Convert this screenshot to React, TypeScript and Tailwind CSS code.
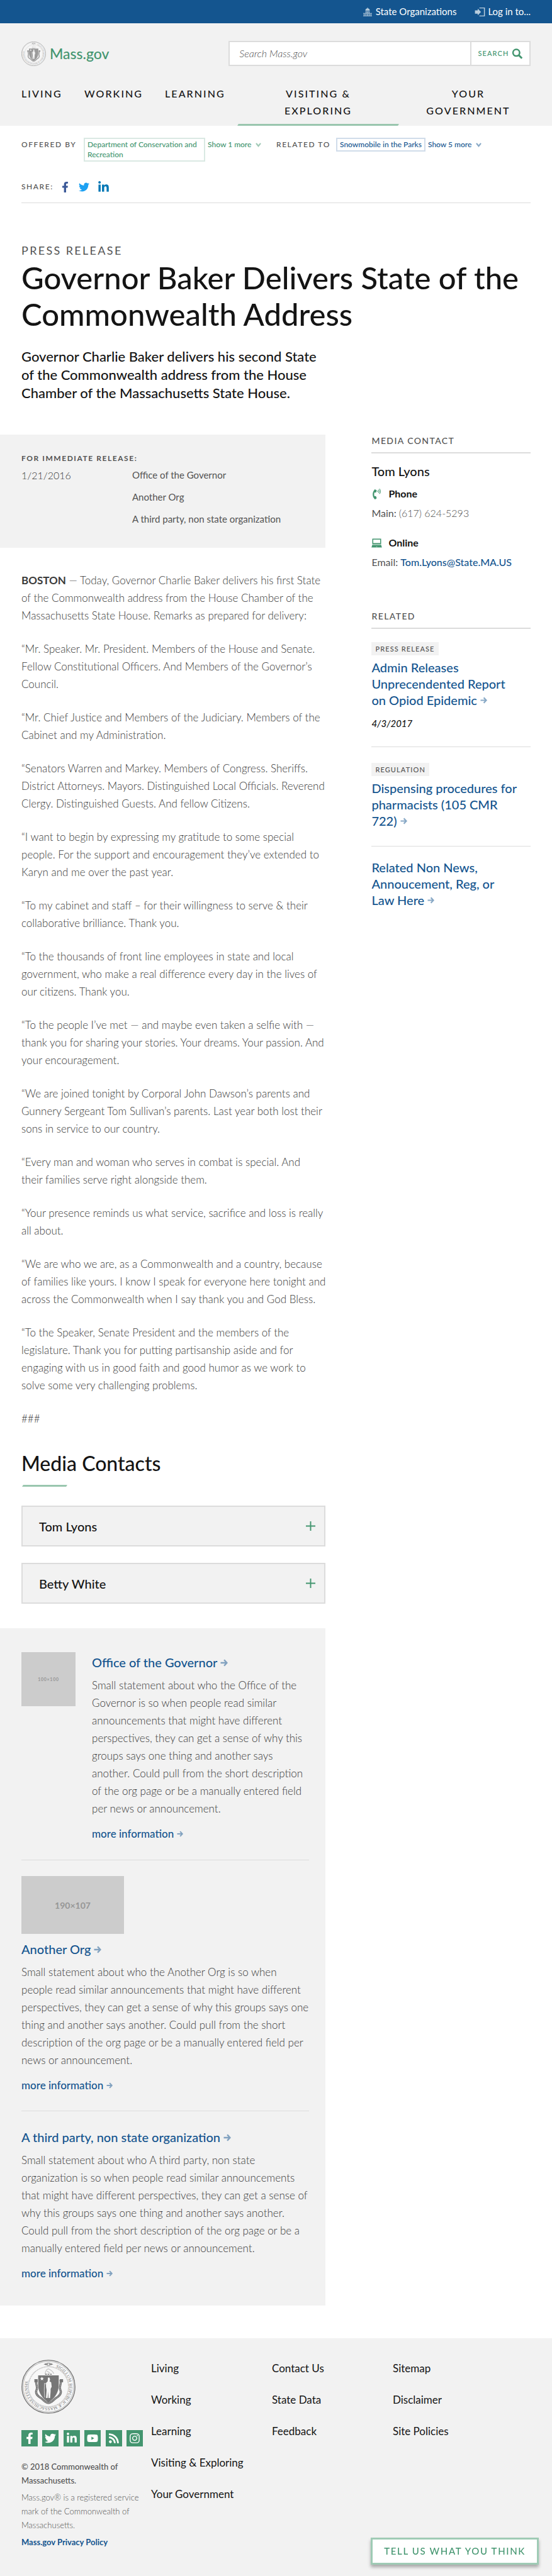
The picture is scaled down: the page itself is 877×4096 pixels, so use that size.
import type { ReactNode } from "react";
import { FaFacebookF, FaInstagram, FaLinkedinIn, FaPhoneVolume, FaRss, FaTwitter, FaYoutube } from "react-icons/fa";

function Seal({ className }: { className: string }) {
  return (
    <svg viewBox="0 0 100 100" className={className} role="img" aria-label="Seal of the Commonwealth">
      <defs>
        <path id="seal-ring" d="M50 11.5 A38.5 38.5 0 1 1 49.9 11.5" />
      </defs>
      <circle cx="50" cy="50" r="49" fill="#f7f7f7" stroke="#767676" strokeWidth="1.6" />
      <circle cx="50" cy="50" r="46.8" fill="none" stroke="#8a8a8a" strokeWidth="0.7" />
      <circle cx="50" cy="50" r="37" fill="none" stroke="#a0a0a0" strokeWidth="1.6" strokeDasharray="1 1" />
      <text fill="#767676" fontSize="8" fontFamily="Liberation Serif, serif">
        <textPath href="#seal-ring" startOffset="14">SIGILLUM REIPUBLICÆ MASSACHUSETTENSIS.</textPath>
      </text>
      <path d="M41 8.5l6-2v4zM59 8.5l-6-2v4z" fill="#767676" />
      <rect x="48" y="6.5" width="4" height="4" fill="none" stroke="#767676" />
      <path d="M44 27c0-6 3-10 6-10 4 2 7 3 10 9M47 21l6 4" fill="none" stroke="#c4c4c4" strokeWidth="1.4" />
      <path d="M44 27h13" stroke="#767676" strokeWidth="1.8" strokeDasharray="3 1.5" />
      <path
        d="M28 37c-3 8 3 12 0 19s3 12 8 15 8 9 14 9 9-6 14-9 11-8 8-15 3-11 0-19"
        fill="none"
        stroke="#767676"
        strokeWidth="4"
      />
      <path
        d="M28 39c-2 7 3 11 0 18s4 11 8 14 8 9 14 9 9-6 14-9 10-7 8-14 2-11 0-18"
        fill="none"
        stroke="#c8c8c8"
        strokeWidth="1"
        strokeDasharray="2 1.4"
      />
      <path d="M24 36h6v6h-6zM71 36h6v6h-6z" fill="#767676" />
      <path d="M31 29h38v17c0 15-7 25-19 33-12-8-19-18-19-33z" fill="#767676" />
      <path d="M38 31.5l1 2.6h2.6l-2.100 1.700.8 2.700-2.300-1.600-2.300 1.600.8-2.700-2.100-1.700H37z" fill="#fff" />
      <path
        d="M49 33h3l1 4-1 3 3 2 1 8-2 4v5l-1 12h-3l-.5-12-1 12h-3l1-15-1-6 0-7 3-3z"
        fill="#f5f5f5"
      />
      <path d="M43 43c-1 8-1 18 0 27M43 45l5-2" fill="none" stroke="#eee" strokeWidth="0.9" />
    </svg>
  );
}

function ArrowIcon({ className }: { className: string }) {
  return (
    <svg viewBox="0 0 14 14" className={`inline opacity-50 ${className}`} aria-hidden="true">
      <path d="M0 7h11M6.500 1.500L11.500 7l-5 5.500" fill="none" stroke="currentColor" strokeWidth="2.800" />
    </svg>
  );
}

function ChevronIcon() {
  return (
    <svg viewBox="0 0 10 8" className="h-[7px] w-[9px] opacity-50" aria-hidden="true">
      <path d="M1 1l4 5 4-5" fill="none" stroke="currentColor" strokeWidth="2.500" />
    </svg>
  );
}

function CapitolIcon() {
  return (
    <svg viewBox="0 0 16 16" className="h-[14px] w-[14px]" fill="#b9cddd" aria-hidden="true">
      <path d="M7.500 0h1v1.500C11 2 12 3.500 12 5.500H4C4 3.500 5 2 7.500 1.500zM4 6.300h8v1H4zM4.500 8h1.500v2H4.500zM7.200 8h1.600v2H7.200zM10 8h1.500v2H10zM0 10h16v1.200H0zM.8 12h2v2.500h-2zM4 12h2v2.500H4zM7 12h2v2.500H7zM10 12h2v2.500h-2zM13.200 12h2v2.500h-2zM0 15h16v1H0z" />
    </svg>
  );
}

function LoginIcon() {
  return (
    <svg viewBox="0 0 18 16" className="h-[14px] w-[17px]" fill="#b9cddd" aria-hidden="true">
      <path d="M0 5h5V2l6 6-6 6v-3H0zM8 0h10v16H8v-1.500h8.300v-13H8z" />
    </svg>
  );
}

function SearchIcon() {
  return (
    <svg viewBox="0 0 20 20" className="h-[17px] w-[18px]" fill="none" stroke="currentColor" aria-hidden="true">
      <circle cx="8" cy="8" r="6.200" strokeWidth="3" />
      <path d="M12.500 12.500L18.500 18.500" strokeWidth="3.400" />
    </svg>
  );
}

function LaptopIcon() {
  return (
    <svg viewBox="0 0 20 18" className="h-[15px] w-[17px]" aria-hidden="true">
      <path d="M2.500 1.500h15v8.500h-15z" fill="#fff" stroke="#43956f" strokeWidth="1.800" />
      <path d="M2 11.500h16l2 6H0z" fill="#43956f" />
      <path d="M2.500 12.500h15M9 16h2" stroke="#b4d5c5" strokeWidth="1" />
    </svg>
  );
}

function OrgBox({ tone, className, children }: { tone: "green" | "blue"; className?: string; children: ReactNode }) {
  const color = tone === "green" ? "border-[#dae9e3] text-[#43956f]" : "border-[#d0dcea] text-[#14558f]";
  return (
    <a href="#org" className={`border-2 px-1 py-px ${color} ${className ?? ""}`}>
      {children}
    </a>
  );
}

const nav = ["Living", "Working", "Learning", "Visiting & Exploring", "Your Government"];

const remarks = [
  "“Mr. Speaker. Mr. President. Members of the House and Senate. Fellow Constitutional Officers. And Members of the Governor’s Council.",
  "“Mr. Chief Justice and Members of the Judiciary. Members of the Cabinet and my Administration.",
  "“Senators Warren and Markey. Members of Congress. Sheriffs. District Attorneys. Mayors. Distinguished Local Officials. Reverend Clergy. Distinguished Guests. And fellow Citizens.",
  "“I want to begin by expressing my gratitude to some special people. For the support and encouragement they’ve extended to Karyn and me over the past year.",
  "“To my cabinet and staff – for their willingness to serve & their collaborative brilliance. Thank you.",
  "“To the thousands of front line employees in state and local government, who make a real difference every day in the lives of our citizens. Thank you.",
  "“To the people I’ve met — and maybe even taken a selfie with — thank you for sharing your stories. Your dreams. Your passion. And your encouragement.",
  "“We are joined tonight by Corporal John Dawson’s parents and Gunnery Sergeant Tom Sullivan’s parents. Last year both lost their sons in service to our country.",
  "“Every man and woman who serves in combat is special. And their\u00a0families serve right alongside them.",
  "“Your presence reminds us what service, sacrifice and loss is really all about.",
  "“We are who we are, as a Commonwealth and a country, because of families like yours. I know I speak for everyone here tonight and across the Commonwealth when I say thank you and God Bless.",
  "“To the Speaker, Senate President and the members of the legislature. Thank you for putting partisanship aside and for engaging with us in good faith and good humor as we work to solve some very challenging problems.",
  "###",
];

const statement = (who: string) =>
  `Small statement about who ${who} is so when people\u00a0read similar announcements that might have different perspectives, they can get a sense of why this groups says one thing and another says another. Could pull from the short description of the org page or be a manually entered field per news or announcement.`;

function OrgText({ title, who }: { title: string; who: string }) {
  return (
    <>
      <h3 className="text-[20px] leading-[26px] font-medium text-[#14558f]">
        <a href="#org">
          {title} <ArrowIcon className="mb-1 h-[12px] w-[13px]" />
        </a>
      </h3>
      <p className="-mr-1 mt-[10px] text-[17px] leading-7 font-light text-[#3a3a3a]">{statement(who)}</p>
      <p className="mt-[14px] text-[17px] leading-6 font-medium text-[#14558f]">
        <a href="#org">
          more information <ArrowIcon className="mb-[3px] h-[10px] w-[11px]" />
        </a>
      </p>
    </>
  );
}

function Accordion({ name }: { name: string }) {
  return (
    <button
      type="button"
      aria-expanded="false"
      className="flex h-[65px] w-full items-center justify-between border-2 border-[#dcdcdc] bg-[#f2f2f2] pr-[14px] pl-[26px] text-[20px] font-medium text-[#141414]"
    >
      {name}
      <svg viewBox="0 0 14 14" className="h-[15px] w-[15px]" aria-hidden="true">
        <path d="M7 0v14M0 7h14" stroke="#43956f" strokeWidth="1.800" />
      </svg>
    </button>
  );
}

function SideHeading({ children }: { children: ReactNode }) {
  return (
    <h2 className="border-b-2 border-[#dcdcdc] pb-[9px] text-[14px] leading-[18px] font-medium tracking-[0.1em] uppercase">
      {children}
    </h2>
  );
}

function Tag({ children }: { children: ReactNode }) {
  return (
    <span className="mb-[6px] block w-fit bg-[#f2f2f2] px-[6px] text-[11px] leading-[21px] font-medium tracking-[0.1em] uppercase">
      {children}
    </span>
  );
}

function RelatedLink({ children }: { children: ReactNode }) {
  return (
    <a href="#related" className="block pr-4 text-[20px] leading-[26px] font-medium text-[#14558f]">
      {children} <ArrowIcon className="mb-1 h-[11px] w-[12px]" />
    </a>
  );
}

const social = [
  { name: "Facebook", Icon: FaFacebookF },
  { name: "Twitter", Icon: FaTwitter },
  { name: "LinkedIn", Icon: FaLinkedinIn },
  { name: "YouTube", Icon: FaYoutube },
  { name: "RSS", Icon: FaRss },
  { name: "Instagram", Icon: FaInstagram },
];

const footerLinks = [
  ["Living", "Working", "Learning", "Visiting & Exploring", "Your Government"],
  ["Contact Us", "State Data", "Feedback"],
  ["Sitemap", "Disclaimer", "Site Policies"],
];

export default function App() {
  return (
    <div className="bg-white font-[Lato,sans-serif] text-[#535353]">
      <div className="flex h-[37px] items-center justify-end gap-[29px] bg-[#14558f] px-[34px] text-[15px] text-white">
        <a href="#orgs" className="flex items-center gap-[6px]">
          <CapitolIcon />
          State Organizations
        </a>
        <button type="button" className="flex items-center gap-1">
          <LoginIcon />
          Log in to...
        </button>
      </div>

      <header className="bg-[#f2f2f2] px-[34px] pt-7">
        <div className="flex items-center justify-between">
          <a href="#home" className="flex items-center gap-[6px] text-[23px] font-medium text-[#43956f]">
            <Seal className="h-[39px] w-[39px] opacity-70" />
            Mass.gov
          </a>
          <form className="flex h-10 w-[59.3%] border-2 border-[#dcdcdc] bg-white" onSubmit={(e) => e.preventDefault()}>
            <input
              type="search"
              aria-label="Search Mass.gov"
              placeholder="Search Mass.gov"
              className="min-w-0 flex-1 px-[15px] text-[16px] font-light text-[#535353] italic placeholder:text-[#535353]"
            />
            <button
              type="submit"
              className="flex w-[94px] items-center justify-center gap-1 border-l-2 border-[#dcdcdc] text-[11px] font-medium tracking-[0.1em] text-[#43956f]"
            >
              SEARCH
              <SearchIcon />
            </button>
          </form>
        </div>
        <nav className="mt-[30px] grid grid-cols-[100fr_128fr_116fr_255fr_210fr] text-[16px] leading-[27px] font-medium tracking-[0.13em] text-[#141414] uppercase">
          {nav.map((item, i) => (
            <div key={item} className={i < 3 ? "" : "flex flex-col text-center"}>
              <a href={`#nav-${i}`} className={i < 3 ? "" : i === 3 ? "px-[60px]" : "pr-7 pl-10"}>
                {item}
              </a>
              {i === 3 && <span className="mt-2 h-[3px] -skew-x-[30deg] bg-[#99c6ae]" />}
            </div>
          ))}
        </nav>
      </header>

      <main>
        <div className="px-[34px]">
          <div className="flex items-start pt-[19px] text-[12px] leading-4 font-medium">
            <span className="w-[99px] py-[3px] tracking-[0.13em] uppercase">Offered by</span>
            <OrgBox tone="green" className="w-[193px]">
              Department of Conservation and Recreation
            </OrgBox>
            <button type="button" className="ml-1 flex w-[109px] items-center gap-[7px] py-[3px] text-[#43956f]">
              Show 1 more <ChevronIcon />
            </button>
            <span className="w-[95px] py-[3px] tracking-[0.13em] uppercase">Related to</span>
            <OrgBox tone="blue">Snowmobile in the Parks</OrgBox>
            <button type="button" className="ml-1 flex items-center gap-[7px] py-[3px] text-[#14558f]">
              Show 5 more <ChevronIcon />
            </button>
          </div>

          <div className="mt-[30px] flex items-center border-b border-[#dcdcdc] pb-[15px] text-[12px] leading-5 font-medium tracking-[0.13em]">
            <span className="w-[61px]">SHARE:</span>
            <div className="flex items-center gap-[13px]">
              <a href="#facebook" aria-label="Facebook">
                <FaFacebookF className="h-[17px] w-[17px] text-[#3b5998]" />
              </a>
              <a href="#twitter" aria-label="Twitter">
                <FaTwitter className="h-[17px] w-[17px] text-[#1da1f2]" />
              </a>
              <a href="#linkedin" aria-label="LinkedIn">
                <FaLinkedinIn className="h-[19px] w-[19px] text-[#0077b5]" />
              </a>
            </div>
          </div>

          <p className="mt-[63px] text-[18px] leading-6 tracking-[0.13em] uppercase">Press Release</p>
          <h1 className="mt-[2px] text-[49px] leading-[58px] font-medium text-[#141414]">
            Governor Baker Delivers State of the Commonwealth Address
          </h1>
          <p className="mt-6 w-[60%] text-[22px] leading-[29px] font-medium text-[#141414]">
            Governor Charlie Baker delivers his second State of the Commonwealth address from the House Chamber of the
            Massachusetts State House.
          </p>
        </div>

        <div className="mt-[52px] flex items-start">
          <div className="w-[59%]">
            <section className="bg-[#f2f2f2] pt-[29px] pb-[37px] pl-[34px]">
              <h2 className="text-[12px] leading-[18px] font-bold tracking-[0.13em]">FOR IMMEDIATE RELEASE:</h2>
              <div className="mt-2 flex items-start">
                <time className="w-[176px] text-[16px] leading-5 font-light text-[#3a3a3a]">1/21/2016</time>
                <ul className="flex flex-col gap-[17px] text-[15px] leading-[18px]">
                  <li>Office of the Governor</li>
                  <li>Another Org</li>
                  <li>A third party, non state organization</li>
                </ul>
              </div>
            </section>

            <article className="mt-[38px] -mr-1 flex flex-col gap-[25px] pl-[34px] text-[17px] leading-7 font-light text-[#3a3a3a]">
              <p>
                <strong className="font-bold">BOSTON</strong> — Today, Governor Charlie Baker delivers his first State of
                the Commonwealth address from the House Chamber of the Massachusetts State House. Remarks as prepared for
                delivery:
              </p>
              {remarks.map((text) => (
                <p key={text}>{text}</p>
              ))}
            </article>

            <section className="mt-[37px] pl-[34px]">
              <h2 className="text-[32px] leading-10 font-medium text-[#141414]">Media Contacts</h2>
              <div className="mt-[14px] ml-[2px] h-[3px] w-[70px] -skew-x-[30deg] bg-[#99c6ae]" />
              <div className="mt-[30px] flex flex-col gap-[26px]">
                <Accordion name="Tom Lyons" />
                <Accordion name="Betty White" />
              </div>
            </section>

            <section className="mt-[39px] bg-[#f2f2f2] pt-[38px] pr-[26px] pb-[39px] pl-[34px]">
              <div className="flex items-start gap-[26px] border-b border-[#dcdcdc] pb-[29px]">
                <div className="flex h-[86px] w-[86px] shrink-0 items-center justify-center bg-[#cccccc] text-[7px] font-bold tracking-[0.1em] text-[#969696]">
                  100×100
                </div>
                <div className="pt-[3px]">
                  <OrgText title="Office of the Governor" who="the Office of the Governor" />
                </div>
              </div>
              <div className="border-b border-[#dcdcdc] pt-[25px] pb-[28px]">
                <div className="mb-[11px] flex h-[92px] w-[163px] items-center justify-center bg-[#cccccc] text-[14px] font-bold text-[#969696]">
                  190×107
                </div>
                <OrgText title="Another Org" who="the Another Org" />
              </div>
              <div className="pt-7">
                <OrgText title="A third party, non state organization" who="A third party, non state organization" />
              </div>
            </section>
          </div>

          <aside className="mr-[34px] ml-[73px] flex-1 pt-px">
            <SideHeading>Media Contact</SideHeading>
            <h3 className="mt-[15px] text-[20px] leading-[26px] font-medium text-[#141414]">Tom Lyons</h3>
            <h4 className="mt-[13px] flex items-center gap-[10px] text-[16px] leading-5 font-bold text-[#141414]">
              <FaPhoneVolume className="h-[17px] w-[17px] text-[#43956f]" />
              Phone
            </h4>
            <p className="mt-[11px] text-[16px] leading-5">
              Main: <span className="font-light">(617) 624-5293</span>
            </p>
            <h4 className="mt-[27px] flex items-center gap-[10px] text-[16px] leading-5 font-bold text-[#141414]">
              <LaptopIcon />
              Online
            </h4>
            <p className="mt-[11px] text-[16px] leading-5">
              Email:{" "}
              <a href="mailto:Tom.Lyons@State.MA.US" className="font-medium text-[#14558f]">
                Tom.Lyons@State.MA.US
              </a>
            </p>

            <div className="mt-[67px]">
              <SideHeading>Related</SideHeading>
            </div>
            <ul>
              <li className="border-b border-[#dcdcdc] pt-[21px] pb-[27px]">
                <Tag>Press Release</Tag>
                <RelatedLink>Admin Releases Unprecendented Report on Opiod Epidemic</RelatedLink>
                <p className="mt-[14px] text-[15px] leading-5 font-medium text-[#141414] italic">4/3/2017</p>
              </li>
              <li className="border-b border-[#dcdcdc] pt-[25px] pb-[27px]">
                <Tag>Regulation</Tag>
                <RelatedLink>Dispensing procedures for pharmacists (105 CMR 722)</RelatedLink>
              </li>
              <li className="pt-5">
                <RelatedLink>{"Related Non News, Annoucement, Reg, or Law\u00a0Here"}</RelatedLink>
              </li>
            </ul>
          </aside>
        </div>
      </main>

      <footer className="mt-[52px] flex bg-[#f2f2f2] px-[34px] pt-[34px] pb-[43px]">
        <div className="w-[206px] text-[13px] leading-[22px]">
          <Seal className="h-[86px] w-[86px]" />
          <ul className="mt-[26px] flex w-[193px] justify-between">
            {social.map(({ name, Icon }) => (
              <li key={name}>
                <a
                  href={`#${name}`}
                  aria-label={name}
                  className="flex h-[26px] w-[26px] items-center justify-center bg-[#43956f] text-white"
                >
                  <Icon className="h-[18px] w-[18px]" />
                </a>
              </li>
            ))}
          </ul>
          <p className="mt-[21px] pr-3 font-medium">© 2018 Commonwealth of Massachusetts.</p>
          <p className="mt-[5px] pr-3 font-light">Mass.gov® is a registered service mark of the Commonwealth of Massachusetts.</p>
          <p className="mt-[5px] font-bold text-[#14558f]">
            <a href="#privacy">Mass.gov Privacy Policy</a>
          </p>
        </div>
        <nav className="grid flex-1 grid-cols-[192fr_192fr_219fr] pt-[3px] text-[17px] leading-[22px] text-[#141414]">
          {footerLinks.map((column) => (
            <ul key={column[0]} className="flex flex-col gap-7">
              {column.map((item) => (
                <li key={item}>
                  <a href="#link">{item}</a>
                </li>
              ))}
            </ul>
          ))}
        </nav>
      </footer>

      <button
        type="button"
        className="fixed right-[21px] bottom-[18px] h-[43px] border-3 border-[#9fcbb5] bg-white px-[18px] text-[15px] font-medium tracking-[0.11em] text-[#43956f] shadow-[0_4px_5px_rgba(0,0,0,0.3)]"
      >
        TELL US WHAT YOU THINK
      </button>
    </div>
  );
}
